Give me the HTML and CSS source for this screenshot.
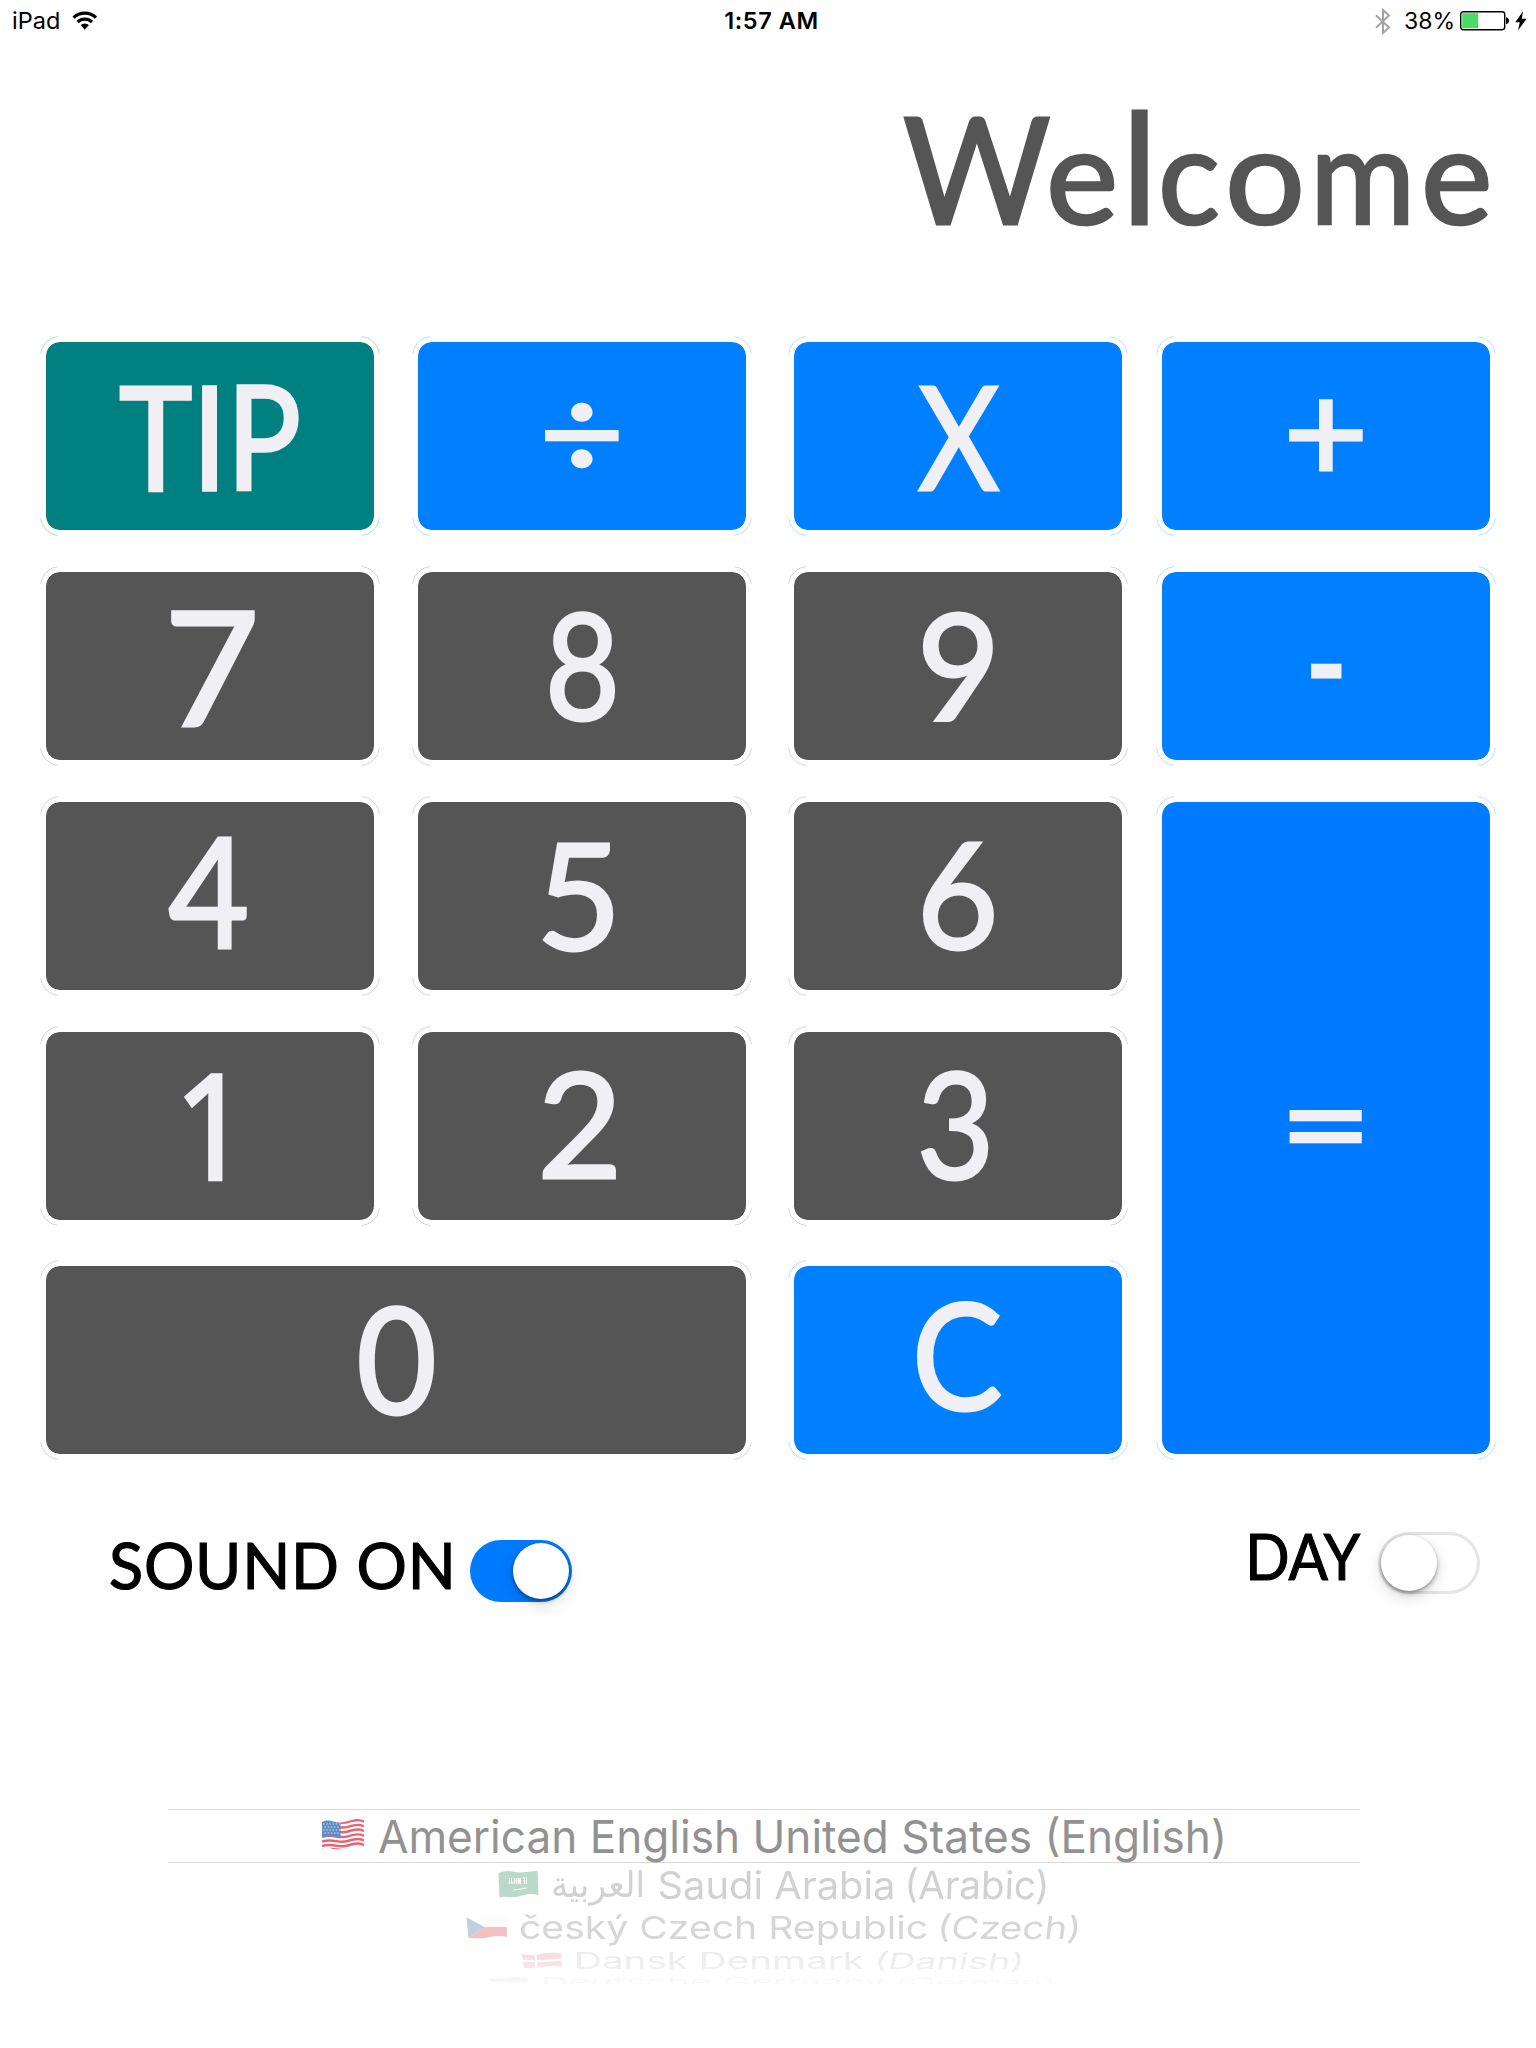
FILE: index.html
```html
<!DOCTYPE html>
<html lang="en">
<head>
<meta charset="utf-8">
<title>Calculator</title>
<link rel="stylesheet" href="styles.css">
</head>
<body>
<header class="status">
  <div class="status-left">
    <span class="device">iPad</span>
    <svg class="wifi" width="26" height="20" viewBox="0 0 26 20"><g fill="none" stroke="#000" stroke-width="3.2"><path d="M1.6 6.6a16 16 0 0 1 22.4 0"/><path d="M5.6 11a10.4 10.4 0 0 1 14.4 0"/></g><path d="M8.7 14.1a6 6 0 0 1 8.2 0L12.8 18.8z"/></svg>
  </div>
  <span class="clock">1:57 AM</span>
  <div class="status-right">
    <svg class="bluetooth" width="16" height="27" viewBox="0 0 16 27"><path d="M1 7.2l13 12.3-6 5.5V2l6 5.5L1 19.8" fill="none" stroke="#a3a3a3" stroke-width="2"/></svg>
    <span class="percent">38%</span>
    <svg class="battery" width="50" height="20" viewBox="0 0 50 20"><rect x=".7" y=".7" width="44" height="18" rx="2.6" fill="#fff" stroke="#000" stroke-width="1.4"/><path fill="#4cd964" d="M2.2 2.2h16v15h-16z"/><path d="M46 6.2c2 .5 3 1.600 3 3.500s-1 3-3 3.500z"/></svg>
    <svg class="bolt" width="12" height="20" viewBox="0 0 12 20"><path d="M8 .3L.3 11.200h4.500L3 19.500 11.600 7.800H6.800z"/></svg>
  </div>
</header>
<div class="display"><span class="display-text"><span class="w w-cap">W</span><span class="w w-e">e</span><span class="w w-l">l</span><span class="w w-c">c</span><span class="w w-o">o</span><span class="w w-m">m</span><span class="w w-e2">e</span></span></div>
<main class="keypad">
  <button class="key tip"><span class="g g-tip">TIP</span></button>
  <button class="key op"><span class="g g-div">÷</span></button>
  <button class="key op third"><span class="g g-x">X</span></button>
  <button class="key op"><span class="g g-plus">+</span></button>
  <button class="key"><span class="g g-7">7</span></button>
  <button class="key"><span class="g g-8">8</span></button>
  <button class="key third"><span class="g g-9">9</span></button>
  <button class="key op"><span class="g g-minus">-</span></button>
  <button class="key"><span class="g g-4">4</span></button>
  <button class="key"><span class="g g-5">5</span></button>
  <button class="key third"><span class="g g-6">6</span></button>
  <button class="key equals"><span class="g g-eq">=</span></button>
  <button class="key"><span class="g g-1">1</span></button>
  <button class="key"><span class="g g-2">2</span></button>
  <button class="key third"><span class="g g-3">3</span></button>
  <button class="key zero"><span class="g g-0">0</span></button>
  <button class="key op third clear"><span class="g g-c">C</span></button>
</main>
<section class="toggles">
  <div class="toggle sound"><span class="label label-sound">SOUND ON</span><span class="switch on"><i class="knob"></i></span></div>
  <div class="toggle day"><span class="label label-day">DAY</span><span class="switch"><i class="knob"></i></span></div>
</section>
<section class="picker">
  <svg class="row selected" width="1192" height="52" viewBox="168 1810 1192 52">
    <g transform="translate(322 1819)">
      <clipPath id="wave"><path d="M0 3Q5 .5 11 2.500T24 2.500 34 0 42 1V28Q35 26.500 28 28.500T16 30.500 6 28.500 0 31z"/></clipPath>
      <g clip-path="url(#wave)" opacity=".72"><path fill="#fff" d="M0 0h42v32H0z"/><g fill="none" stroke="#e0283c" stroke-width="2.400"><path d="M0 3.500C12 0 16 6 26 3S38 1 42 2.500M0 8.300C12 4.800 16 10.800 26 7.800S38 5.800 42 7.300M0 13C12 9.500 16 15.500 26 12.500S38 10.500 42 12M0 17.800C12 14.300 16 20.300 26 17.300S38 15.300 42 16.800M0 22.500C12 19 16 25 26 22S38 20 42 21.500M0 27C12 23.500 16 29.500 26 26.500S38 24.500 42 26M0 31C12 27.500 16 33 26 30.500S38 28.500 42 30"/></g><path fill="#2462ae" d="M0 0h18.500v19Q12 17 8 17T0 18.500z"/><path d="M1 5h17M2.500 8h16M1 11h17M2.500 14h16" stroke="#c8dcf2" stroke-width="1.200" stroke-dasharray="1.400 1.800"/></g>
    </g>
    <text x="378" y="1852.700" font-size="45" textLength="849" lengthAdjust="spacingAndGlyphs">American English United States (English)</text>
  </svg>
  <div class="wheel">
  <svg class="row" width="1192" height="45" viewBox="168 1863 1192 45" fill="#d1d1d1">
    <g transform="translate(498.500 1870)" opacity=".3"><path fill="#1d8250" d="M0 3Q7 0 14 1.500T28 2 39 .8L40 25Q32 23 24 25.500T10 27 1 28z"/><g stroke="#fff" fill="none"><path d="M11 8v6M13 8v5h3V8M18 8v6M20 14V8l2 6V8M24 8h4v6M26 9v5" stroke-width="1.200"/><path d="M15 20q8-1 13-2" stroke-width="1.200"/></g></g>
    <text class="arabic" x="551" y="1897" font-size="36" textLength="94" lengthAdjust="spacingAndGlyphs" direction="ltr">العربية</text>
    <text transform="translate(657.500 1898.700) scale(1 .9)" font-size="43" textLength="238" lengthAdjust="spacingAndGlyphs">Saudi Arabia</text>
    <text transform="translate(904 1898.700) skewX(-2) scale(1 .9)" font-size="43" textLength="145" lengthAdjust="spacingAndGlyphs">(Arabic)</text>
  </svg>
  <svg class="row" width="1192" height="38" viewBox="168 1908 1192 38" fill="#d6d6d6">
    <g transform="translate(466.500 1916)" opacity=".3"><path fill="#f4f4f4" d="M0 1.500Q9 4 18 1.500T39.500 1L40 11H18z"/><path fill="#e12c36" d="M18 11h22.400v10Q32 19 24 21T2 22z"/><path fill="#34648f" d="M0 1.500L18 11 2 22z"/></g>
    <text transform="translate(519 1939) scale(1 .735)" font-size="43" textLength="409" lengthAdjust="spacingAndGlyphs">český Czech Republic</text>
    <text transform="translate(936 1939) skewX(-7) scale(1 .735)" font-size="43" textLength="144" lengthAdjust="spacingAndGlyphs">(Czech)</text>
  </svg>
  <svg class="row" width="1192" height="27" viewBox="168 1946 1192 27" fill="#e8e8e8">
    <g transform="translate(522 1953)" opacity=".16"><path fill="#d70b30" d="M0 1Q9 3 18 1T39 0l1 14Q31 12 22 14T2 15z"/><path d="M1 7.500q14 2 39-1M13.500 2l1 13" stroke="#fff" stroke-width="2" fill="none"/></g>
    <text transform="translate(574 1969) scale(1 .52)" font-size="43" textLength="290" lengthAdjust="spacingAndGlyphs">Dansk Denmark</text>
    <text transform="translate(873 1969) skewX(-12) scale(1 .52)" font-size="43" textLength="150" lengthAdjust="spacingAndGlyphs">(Danish)</text>
  </svg>
  <svg class="row last" width="1192" height="11" viewBox="168 1973 1192 11" fill="#f0f0f0">
    <path d="M489 1978q9 2 18 0t20 0l1 4h-37z" fill="#f2d8d8" opacity=".6"/>
    <text transform="translate(541 1987) scale(1 .3)" font-size="43" textLength="345" lengthAdjust="spacingAndGlyphs">Deutsche Germany</text>
    <text transform="translate(894 1987) skewX(-18) scale(1 .3)" font-size="43" textLength="160" lengthAdjust="spacingAndGlyphs">(German)</text>
  </svg>
  </div>
</section>
</body>
</html>
```
FILE: styles.css
```css
* { box-sizing: border-box; }
body {
  margin: 0;
  width: 1536px;
  height: 2048px;
  overflow: hidden;
  background: #fff;
  color: #000;
  font-family: Inter, "Liberation Sans", sans-serif;
  display: flex;
  flex-direction: column;
}
svg { display: block; flex: none; }

.status {
  height: 40px;
  flex: none;
  display: grid;
  grid-template-columns: 1fr auto 1fr;
  align-items: center;
  padding: 2px 9px 0 12px;
  font-size: 23.5px;
  line-height: 38px;
}
.status-left, .status-right { display: flex; align-items: center; }
.status-right { justify-content: flex-end; }
.wifi { margin: 0 0 1px 12px; }
.clock { font-weight: 600; margin-left: 4px; letter-spacing: .55px; }
.bluetooth { margin-right: 13px; }
.percent { margin-right: 5px; font-size: 23px; }
.bolt { margin-left: 5px; }

.display {
  height: 296px;
  flex: none;
  display: flex;
  justify-content: flex-end;
  align-items: flex-start;
  padding: 39px 43px 0 0;
  font-family: Lato, sans-serif;
  font-size: 147px;
  line-height: 176px;
  color: #555;
}
.display-text {
  -webkit-text-stroke: 3px #555;
  white-space: nowrap;
}
.w { display: inline-block; transform-origin: 0 145px; }
.w-cap { transform: translateX(27px) scale(.97, 1); }
.w-e { transform: translateX(17px) scale(.93, .91); }
.w-l { transform: translateX(16px) scale(1, 1.04); }
.w-c { transform: translateX(17px) scale(.88, .91); }
.w-o { transform: translateX(14px) scale(.96, .91); }
.w-m { transform: translateX(16px) scale(.87, .91); }
.w-e2 { transform: translateX(6px) scale(.92, .91); }

.keypad {
  flex: none;
  display: grid;
  grid-template-columns: 340px 340px 340px 340px;
  grid-template-rows: 200px 200px 200px 200px 200px;
  column-gap: 32px;
  row-gap: 30px;
  height: 1124px;
  padding-left: 40px;
}
.key {
  position: relative;
  margin: 0;
  padding: 0;
  width: 340px;
  height: 200px;
  border: 6px solid #fff;
  border-radius: 20px;
  background: #555 padding-box;
  color: #efeff4;
  font-family: Lato, sans-serif;
  font-size: 147px;
  line-height: 176px;
  display: flex;
  justify-content: center;
  align-items: center;
}
/* hairline arcs outside the four rounded corners */
.key::before {
  content: "";
  position: absolute;
  inset: -6px;
  border: 1px solid currentColor;
  border-radius: 20px;
  color: #cecece;
  -webkit-mask: linear-gradient(#000 18px, transparent 18px, transparent calc(100% - 18px), #000 calc(100% - 18px));
  mask: linear-gradient(#000 18px, transparent 18px, transparent calc(100% - 18px), #000 calc(100% - 18px));
  clip-path: polygon(0 0, 18px 0, 18px 100%, calc(100% - 18px) 100%, calc(100% - 18px) 0, 100% 0, 100% 100%, 0 100%);
}
.third { margin-left: 4px; }
.op { background-color: #0080ff; }
.op::before, .equals::before { color: #b0d8ff; }
.tip { background-color: #008080; }
.tip::before { color: #a8d4d4; }
.equals { grid-column: 4; grid-row: 3 / 6; height: 664px; background-color: #007aff; }
.zero { grid-column: 1 / 3; margin-top: 4px; width: 712px; }
.clear { margin-top: 4px; }

.g {
  display: block;
  -webkit-text-stroke: 3px #efeff4;
  transform: translateY(-3px);
}
.g-tip { transform: translateY(-2px) scale(.84, .98); -webkit-text-stroke-width: 3.5px; }
.g-div { transform: translateY(-7px) scaleY(.88); }
.g-x { transform: translate(1px, -2px) scale(.85, .98); }
.g-plus { transform: translateY(-8px) scaleY(.95); }
.g-7 { transform: translate(2px, -2px) scale(1.12, 1.08); }
.g-8 { transform: translate(1px, -3px) scaleX(.88); }
.g-9 { transform: translate(1px, -3px) scaleX(.98); }
.g-minus { transform: translateY(-8px) scale(.77, 1.05); }
.g-4 { transform: translate(-1px, -7px) scale(.95, 1.04); }
.g-5 { transform: translate(-3px, -3px); }
.g-6 { transform: translateY(-4px) scaleX(.96); }
.g-1 { transform: translate(2px, -3px) scale(.88, .98); font-family: "Open Sans", sans-serif; -webkit-text-stroke-width: 4.5px; }
.g-2 { transform: translate(-2px, -4px) scaleY(.99); }
.g-3 { transform: translate(-2px, -4px) scaleX(.91); }
.g-eq { transform: translateY(-7px) scale(1.09, .88); }
.g-0 { transform: translate(1px, -3px) scaleX(.94); }
.g-c { transform: translate(-1px, -7px) scaleX(.92); }

.toggles {
  flex: none;
  display: flex;
  justify-content: space-between;
  align-items: flex-start;
  height: 349px;
  padding: 72px 56px 0 109px;
}
.toggle { display: flex; align-items: flex-start; gap: 15px; }
.sound { padding-top: 8px; }
.label {
  font-family: Lato, sans-serif;
  font-size: 63px;
  line-height: 50px;
  -webkit-text-stroke: 1.2px #000;
}
.label-sound { letter-spacing: .75px; margin-right: -2px; }
.label-day { transform: translate(-3px, -1px) scaleX(.925); transform-origin: right; }
.switch {
  display: block;
  width: 102px;
  height: 62px;
  padding: 3px;
  border-radius: 31px;
  background: #fff;
  box-shadow: inset 0 0 0 3px #e5e5e5;
}
.knob {
  display: block;
  width: 56px;
  height: 56px;
  border-radius: 50%;
  background: #fff;
  box-shadow: 0 2px 4px rgba(0,0,0,.38), 0 6px 16px rgba(0,0,0,.15);
}
.switch.on { background: #007aff; box-shadow: none; }
.switch.on .knob { margin-left: 40px; }

.picker { width: 1192px; margin-left: 168px; flex: none; }
.row { font-family: Inter, sans-serif; overflow: visible; }
.row.last { overflow: hidden; }
.selected { fill: #929292; box-sizing: content-box; border-top: 1px solid #d8d8d8; border-bottom: 1px solid #d8d8d8; }
.arabic { font-family: "DejaVu Sans", sans-serif; }
.wheel {
  -webkit-mask: linear-gradient(#000 70%, rgba(0,0,0,.4));
  mask: linear-gradient(#000 70%, rgba(0,0,0,.4));
}
```
